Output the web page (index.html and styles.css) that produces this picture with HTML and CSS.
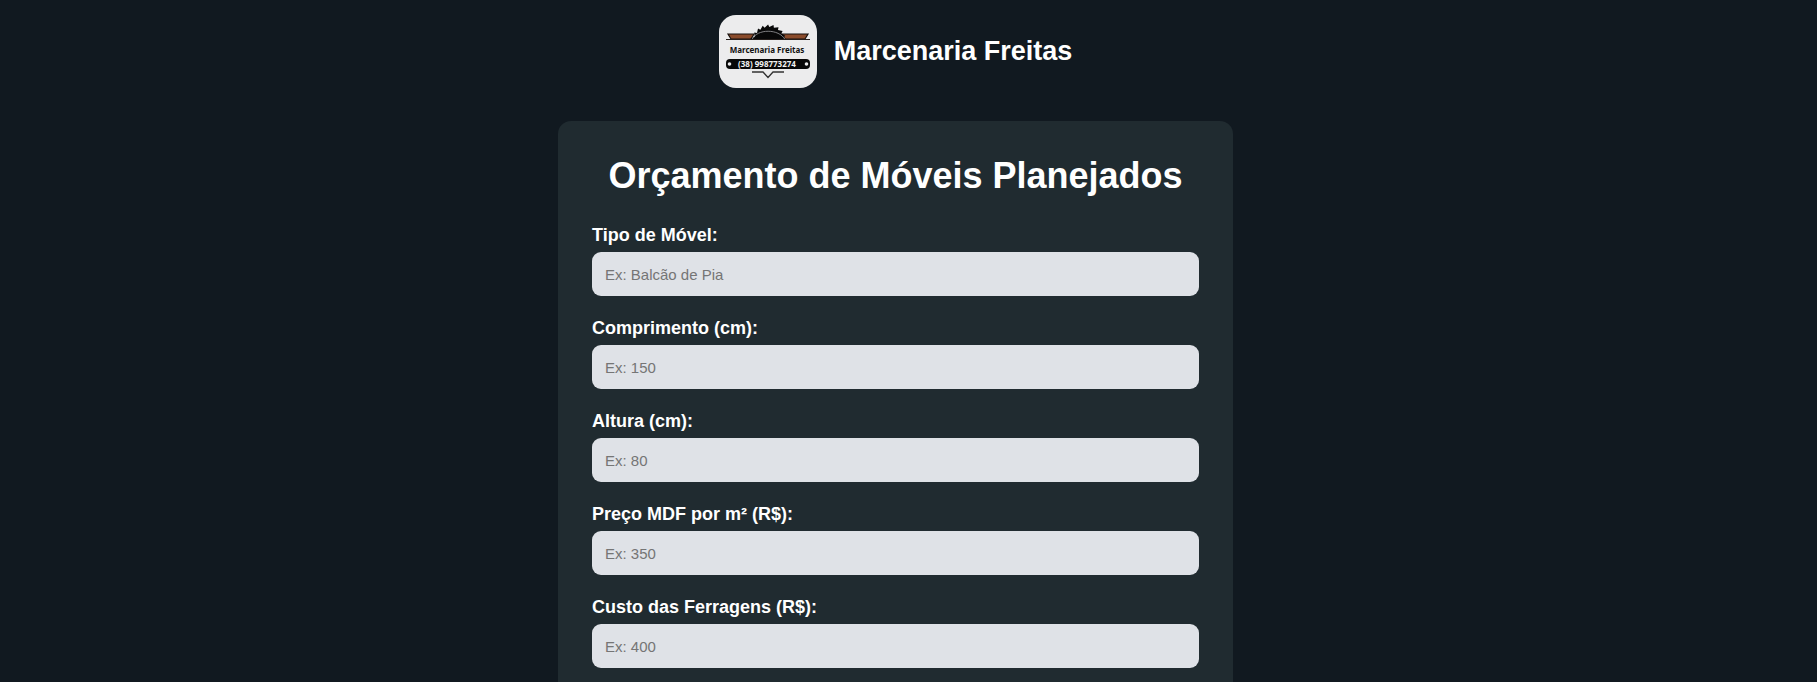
FILE: index.html
```html
<!DOCTYPE html>
<html lang="pt-BR">
<head>
  <meta charset="utf-8">
  <meta name="viewport" content="width=device-width, initial-scale=1">
  <title>Marcenaria Freitas</title>
  <link rel="stylesheet" href="styles.css">
</head>
<body>
  <header class="header">
    <svg class="logo" viewBox="0 0 98 73" role="img" aria-label="Logo Marcenaria Freitas">
      <rect width="98" height="73" fill="#ececed"/>
      <path d="M9 19h26l-3 5H12z" fill="#8a4b2b" stroke="#17110e" stroke-width="1.2"/>
      <path d="M89 19H63l3 5h20z" fill="#8a4b2b" stroke="#17110e" stroke-width="1.2"/>
      <path d="M30 25L33.100 22.500 35.800 22.100 35.300 17.500 38 18 39 13.400 41.400 14.700 43.700 10.700 45.600 12.700 49.100 9.500 50.300 12 54.500 10.100 54.900 12.800 59.500 12.300 59 15 63.600 16 62.300 18.400 66.300 20.700 64.300 22.600 69 25z" fill="#080808"/>
      <path d="M33 24.500C38 13.500 60 13.500 66 24.500" fill="none" stroke="#8c8c8e" stroke-width="0.900"/>
      <path d="M7 24.500h84" stroke="#27201d" stroke-width="1"/>
      <text class="logo-name" x="48" y="38" text-anchor="middle">Marcenaria Freitas</text>
      <rect x="7" y="44" width="84" height="10" rx="4" fill="#080808"/>
      <circle cx="10.500" cy="49" r="1.800" fill="#ececed"/>
      <circle cx="87.500" cy="49" r="1.800" fill="#ececed"/>
      <text class="logo-phone" x="48" y="52" text-anchor="middle">(38) 998773274</text>
      <path d="M33 57h11l5 5.500 5-5.500h11" fill="none" stroke="#333" stroke-width="1.300"/>
    </svg>
    <div class="brand">Marcenaria Freitas</div>
  </header>
  <main class="card">
    <h1 class="title">Orçamento de Móveis Planejados</h1>
    <form class="form">
      <div class="field">
        <label class="label" for="tipo">Tipo de Móvel:</label>
        <input class="input" id="tipo" type="text" placeholder="Ex: Balcão de Pia">
      </div>
      <div class="field">
        <label class="label" for="comprimento">Comprimento (cm):</label>
        <input class="input" id="comprimento" type="number" placeholder="Ex: 150">
      </div>
      <div class="field">
        <label class="label" for="altura">Altura (cm):</label>
        <input class="input" id="altura" type="number" placeholder="Ex: 80">
      </div>
      <div class="field">
        <label class="label" for="preco">Preço MDF por m² (R$):</label>
        <input class="input" id="preco" type="number" placeholder="Ex: 350">
      </div>
      <div class="field">
        <label class="label" for="ferragens">Custo das Ferragens (R$):</label>
        <input class="input" id="ferragens" type="number" placeholder="Ex: 400">
      </div>
    </form>
  </main>
</body>
</html>
```
FILE: styles.css
```css
* {
  box-sizing: border-box;
}

body {
  margin: 0;
  padding: 15px 26px 0 0;
  background: #111920;
  color: #fff;
  font-family: Arial, "Liberation Sans", sans-serif;
}

.header {
  display: flex;
  align-items: center;
  justify-content: center;
  gap: 17px;
  margin-bottom: 33px;
}

.logo {
  width: 98px;
  height: 73px;
  border-radius: 17px;
}

.logo-name {
  fill: #111;
  font: bold 8px "Noto Sans", sans-serif;
}

.logo-phone {
  fill: #f2f2f2;
  font: bold 8px "Noto Sans", sans-serif;
}

.brand {
  padding-bottom: 2px;
  font-size: 27px;
  font-weight: bold;
  line-height: 32px;
}

.card {
  max-width: 675px;
  margin: 0 auto;
  padding: 35px 34px 32px;
  border-radius: 13px;
  background: #202b30;
}

.title {
  margin: 0 0 29px;
  font-size: 36px;
  line-height: 40px;
  text-align: center;
}

.form {
  display: grid;
  gap: 22px;
}

.field {
  display: grid;
  gap: 6px;
}

.label {
  font-size: 18px;
  font-weight: bold;
  line-height: 21px;
}

.input {
  width: 100%;
  height: 44px;
  padding: 0 13px;
  border: 0;
  border-radius: 9px;
  background: #dfe2e7;
  color: #222;
  font-family: inherit;
  font-size: 15px;
}

.input::placeholder {
  color: #757575;
}
```
